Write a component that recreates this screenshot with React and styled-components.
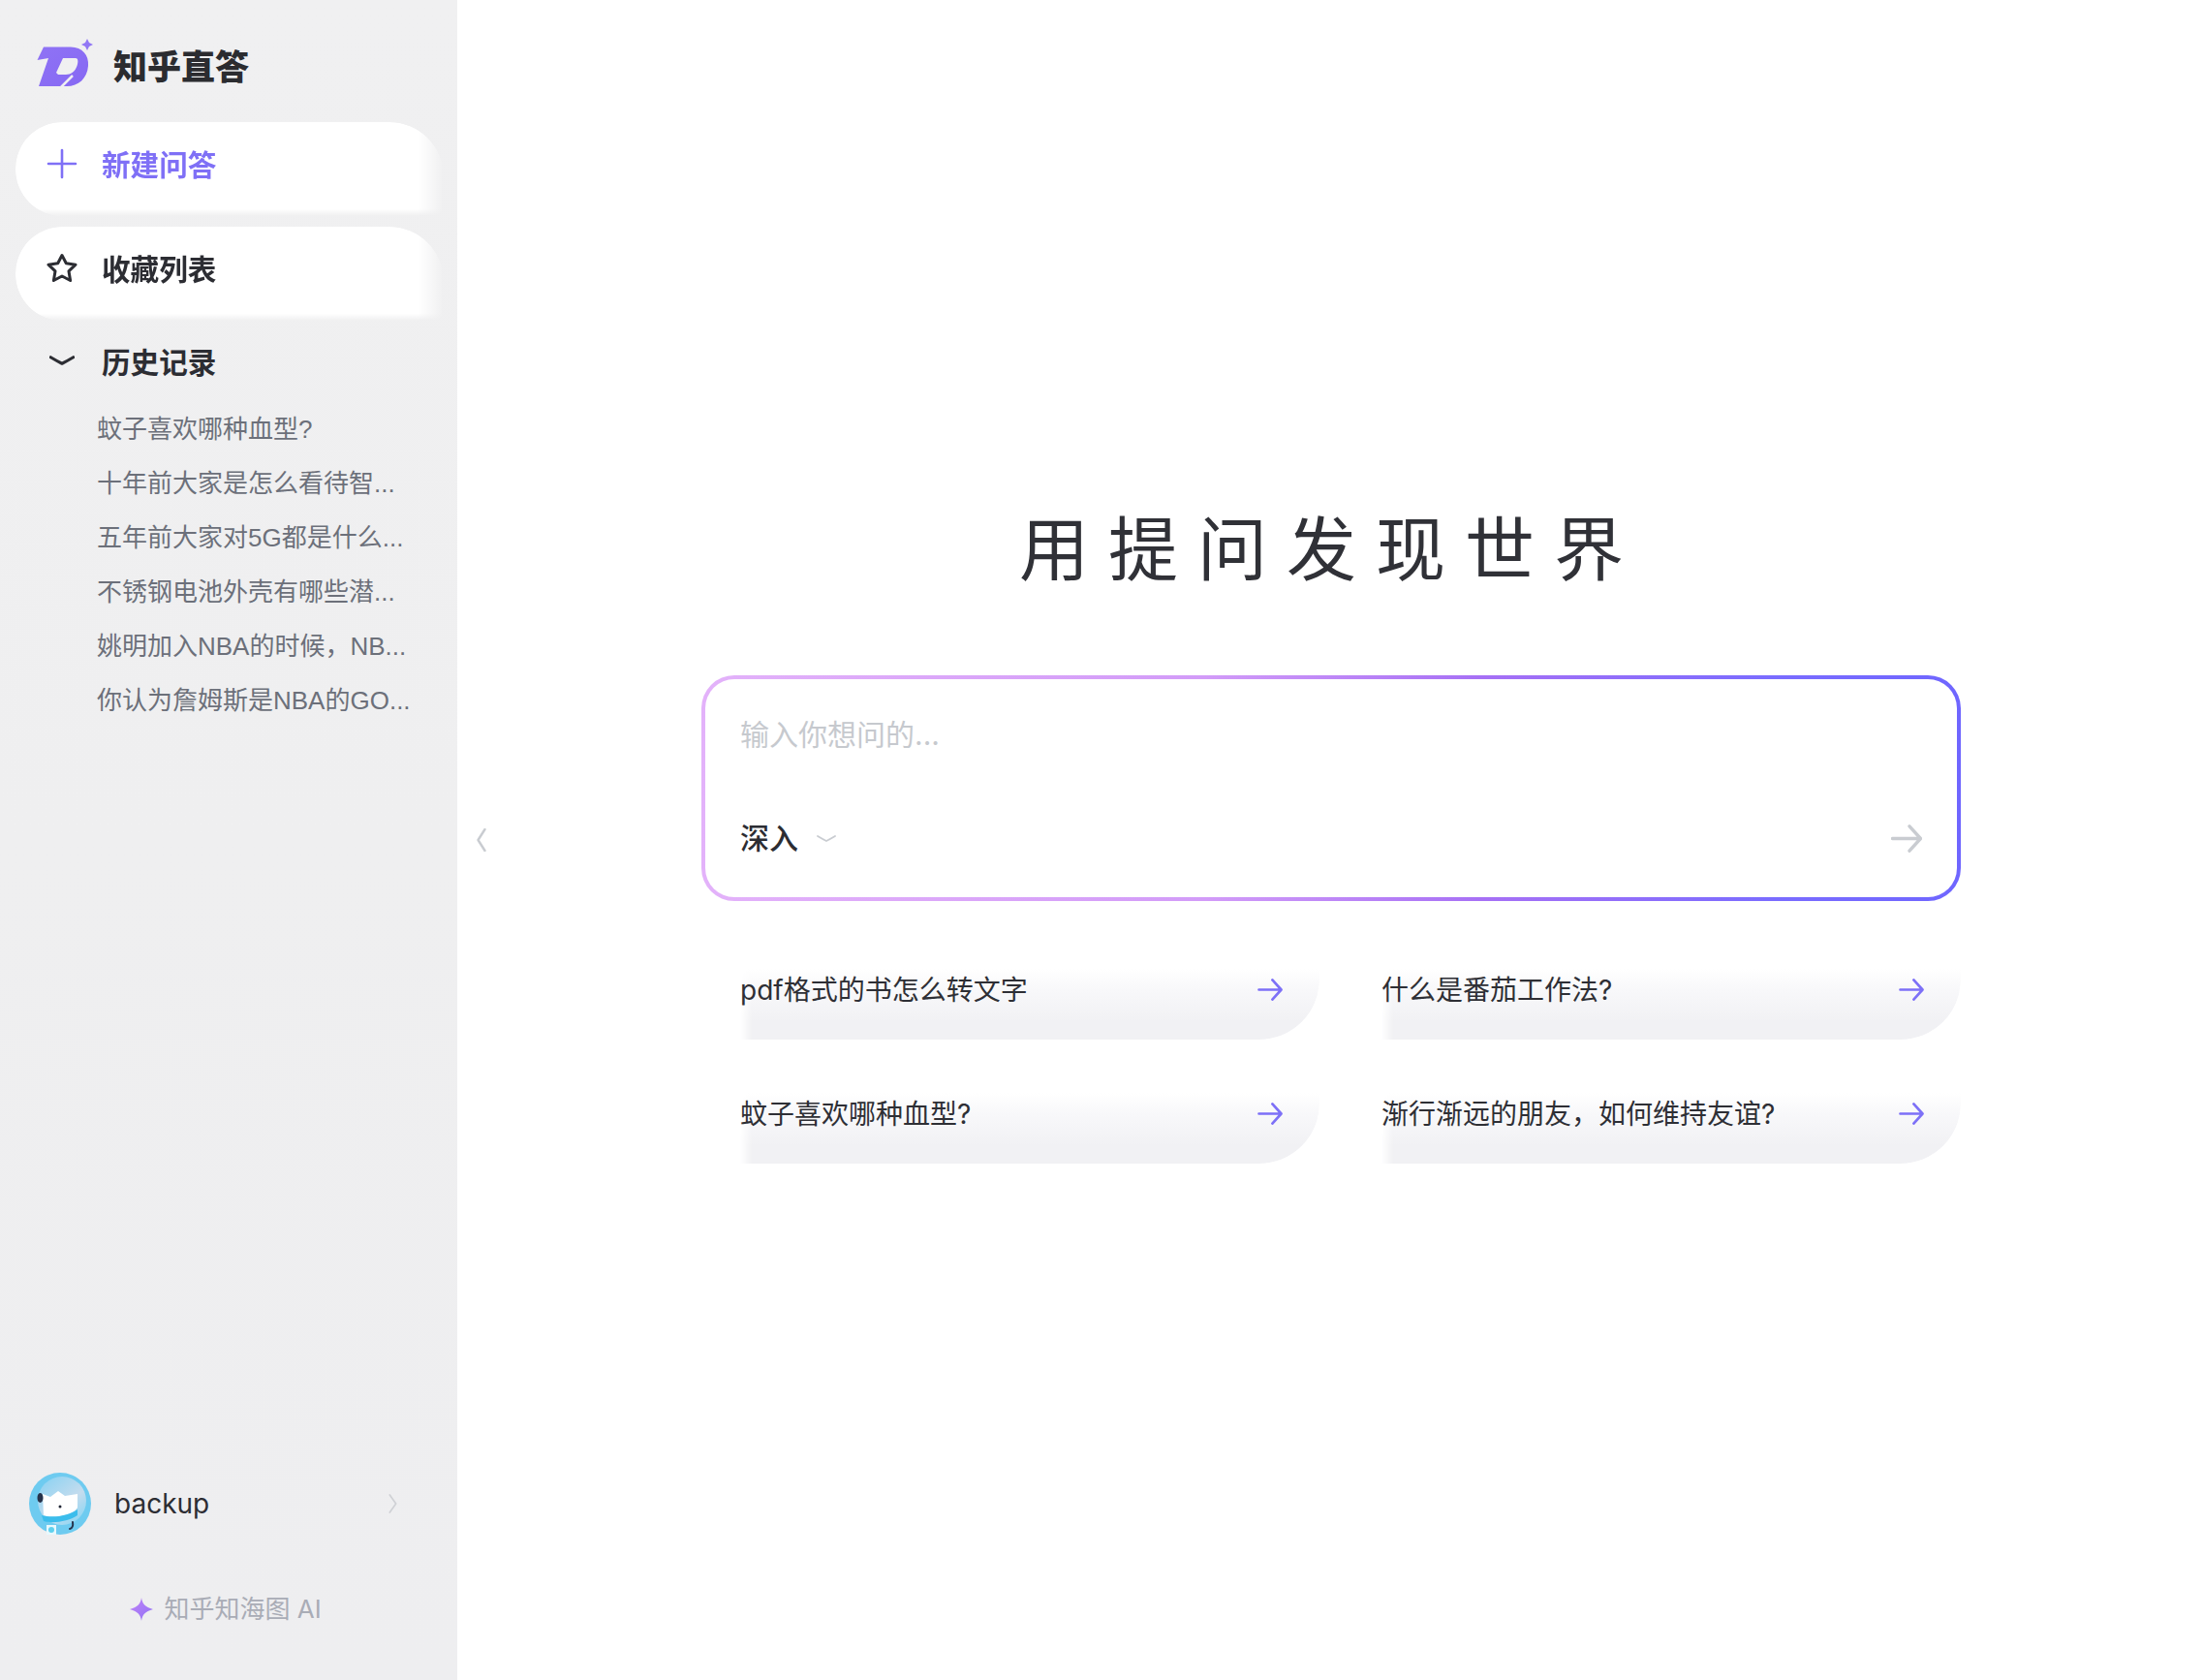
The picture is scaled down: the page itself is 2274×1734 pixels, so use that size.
import React from "react";
import styled, { createGlobalStyle } from "styled-components";

const GlobalStyle = createGlobalStyle`
  * { box-sizing: border-box; }
  html, body { margin: 0; padding: 0; background: #fff; }
  body {
    font-family: Inter, "Noto Sans CJK SC", sans-serif;
    color: #2c2d33;
  }
`;

const Page = styled.div`
  display: flex;
  height: 100vh;
  min-height: 1734px;
`;

const Sidebar = styled.aside`
  width: 472px;
  flex-shrink: 0;
  display: flex;
  flex-direction: column;
  background: linear-gradient(to bottom, #f0f0f1, #efeff0 50%, #eeeef0);
  padding-top: 40px;
`;

const Brand = styled.div`
  display: flex;
  align-items: center;
  height: 50px;
  margin-bottom: 36px;
  padding-left: 38px;
  gap: 19px;
`;

const BrandName = styled.span`
  padding-top: 8px;
  font-size: 35px;
  font-weight: 900;
  line-height: 50px;
  color: #2b2c30;
`;

const NavButton = styled.div`
  display: flex;
  align-items: center;
  width: 442px;
  height: 97px;
  margin: 0 0 11px 16px;
  padding: 0 0 12px 32px;
  gap: 25px;
  background: #fff;
  border-radius: 48px 56px 0 48px;
  color: ${(p) => (p.$accent ? "#7f70f6" : "#2c2d33")};
  font-size: 29.6px;
  font-weight: 600;
  -webkit-mask-image: linear-gradient(to bottom, #000 92%, transparent),
    linear-gradient(to left, transparent, #000 6%);
  -webkit-mask-composite: source-in;
  mask-image: linear-gradient(to bottom, #000 92%, transparent),
    linear-gradient(to left, transparent, #000 6%);
  mask-composite: intersect;
`;

const NavIcon = styled.svg`
  width: 32px;
  height: 32px;
  flex-shrink: 0;
  fill: none;
  stroke: currentColor;
  stroke-linecap: round;
  stroke-linejoin: round;
`;

const ChevronSlot = styled.span`
  display: flex;
  align-items: center;
  justify-content: center;
  width: 32px;
  height: 32px;
  flex-shrink: 0;
`;

const HistoryHeader = styled.div`
  display: flex;
  align-items: center;
  height: 56px;
  margin-top: 2px;
  padding-left: 48px;
  gap: 25px;
  font-size: 29.6px;
  font-weight: 600;
`;

const HistoryList = styled.ul`
  list-style: none;
  margin: 15px 0 0;
  padding: 0 0 0 100px;
  font-family: "Liberation Sans", "Noto Sans CJK SC", sans-serif;
`;

const HistoryItem = styled.li`
  height: 56px;
  line-height: 56px;
  font-size: 26px;
  color: #6c707a;
  white-space: nowrap;
`;

const SidebarFooter = styled.div`
  margin-top: auto;
  padding-bottom: 54px;
`;

const UserRow = styled.div`
  display: flex;
  align-items: center;
  padding: 0 62px 0 30px;
  gap: 24px;
  margin-bottom: 58px;
`;

const UserName = styled.span`
  flex: 1;
  font-size: 28px;
  line-height: 64px;
  color: #2c2d33;
`;

const Credit = styled.div`
  display: flex;
  align-items: center;
  justify-content: center;
  gap: 11px;
  margin-left: -6px;
  font-size: 26px;
  line-height: 38px;
  color: #a9acb6;
`;

const Main = styled.main`
  flex: 1;
  display: flex;
  min-width: 0;
  background: #fff;
`;

const CollapseHandle = styled.div`
  align-self: center;
  width: 252px;
  padding-left: 20px;
  line-height: 0;
`;

const Content = styled.div`
  width: 1300px;
  padding-top: 517px;
`;

const Headline = styled.h1`
  margin: 0 0 80px;
  text-align: center;
  font-size: 72px;
  line-height: 100px;
  font-weight: 400;
  letter-spacing: 20px;
  color: #303137;
`;

const AskBox = styled.div`
  height: 233px;
  display: flex;
  flex-direction: column;
  justify-content: space-between;
  padding: 35px 36px 39px 36px;
  border: 4px solid transparent;
  border-radius: 34px;
  background: linear-gradient(#fff, #fff) padding-box,
    linear-gradient(90deg, #e3b2fa 0%, #d29bf8 40%, #a670f5 62%, #7a6cff 85%, #6f66ff 100%) border-box;
`;

const Placeholder = styled.div`
  font-size: 30px;
  line-height: 44px;
  color: #c6c9ce;
`;

const AskFooter = styled.div`
  display: flex;
  align-items: center;
  justify-content: space-between;
`;

const ModePicker = styled.div`
  display: flex;
  align-items: center;
  gap: 19px;
  font-size: 30px;
  font-weight: 500;
  line-height: 44px;
  color: #2c2d33;
`;

const Suggestions = styled.div`
  display: grid;
  grid-template-columns: 1fr 1fr;
  margin: 70px 0 0 40px;
  column-gap: 64px;
  row-gap: 55px;
`;

const Suggestion = styled.div`
  position: relative;
  display: flex;
  align-items: flex-start;
  justify-content: space-between;
  height: 73px;
  padding: 2px 38px 0 0;
  font-size: 28px;
  line-height: 40px;
  color: #2e2f35;
  &::before {
    content: "";
    position: absolute;
    inset: 0;
    z-index: 0;
    border-radius: 0 0 62px 0;
    background: linear-gradient(to bottom, #fff 0%, #f8f8fa 30%, #f1f1f4 75%);
    -webkit-mask-image: linear-gradient(to right, transparent, #000 12px);
    mask-image: linear-gradient(to right, transparent, #000 12px);
  }
  & > * {
    position: relative;
    z-index: 1;
  }
`;

const Arrow = styled.svg`
  flex-shrink: 0;
  width: ${(p) => p.$size}px;
  height: ${(p) => Math.round(p.$size * 0.9)}px;
  margin-top: ${(p) => p.$top}px;
  fill: none;
  stroke: ${(p) => p.$color};
  stroke-width: 2.8;
  stroke-linecap: round;
  stroke-linejoin: round;
`;

const Chevron = ({ dir, width, height, stroke, strokeWidth }) => {
  const paths = {
    down: "M1 2 Q6 5 10 7 Q14 5 19 2",
    left: "M8 1 L1 12 L8 23",
    right: "M1 1 L8 11 L1 21",
  };
  const boxes = { down: "0 0 20 9", left: "0 0 9 24", right: "0 0 9 22" };
  return (
    <svg width={width} height={height} viewBox={boxes[dir]} fill="none" stroke={stroke} strokeWidth={strokeWidth} strokeLinecap="round" strokeLinejoin="round">
      <path d={paths[dir]} />
    </svg>
  );
};

const ArrowIcon = ({ size, top, color }) => (
  <Arrow $size={size} $top={top} $color={color} viewBox="0 0 26 24">
    <path d="M1 12H24.5M15.5 1.5L25 12L15.5 22.5" />
  </Arrow>
);

const Logo = () => (
  <svg width="60" height="50" viewBox="0 0 60 50">
    <defs>
      <linearGradient id="logoFill" x1="0" y1="0" x2="1" y2="1">
        <stop offset="0" stopColor="#8f73f5" />
        <stop offset="1" stopColor="#8668f3" />
      </linearGradient>
    </defs>
    <path
      fillRule="evenodd"
      fill="url(#logoFill)"
      d="M0.5 22 L7 8.5 H35 C47 8.5 54 17 53 28 C52 41 43 49 31 49 H2 L12 20 Z M27 20 L40 20 C42.5 20 43 23 41.5 28 C39.5 34 35 37 30 37 L22 37 L20 35 Z"
    />
    <path d="M25 50 L37 38" stroke="#efeff1" strokeWidth="2.5" />
    <path d="M52 0 L54 4 L58 6 L54 8 L52 12 L50 8 L46 6 L50 4 Z" fill="#9278f5" />
  </svg>
);

const Avatar = () => (
  <svg width="64" height="64" viewBox="0 0 64 64">
    <defs>
      <linearGradient id="avatarInner" x1="0.2" y1="0" x2="0.9" y2="0.9">
        <stop offset="0" stopColor="#8fd3f2" />
        <stop offset="0.6" stopColor="#c4dcee" />
        <stop offset="1" stopColor="#8ed6f3" />
      </linearGradient>
    </defs>
    <circle cx="32" cy="32" r="32" fill="#6ecbf0" />
    <circle cx="34" cy="29" r="25" fill="url(#avatarInner)" />
    <path d="M14 22 L22 25 L30 19 L37 24 L50 22 L50 36 C46 44 24 48 15 44 Z" fill="#fff" />
    <path d="M13 44 C24 47 40 45 50 38 L50 44 C42 50 24 53 15 50 Z" fill="#3bbdec" />
    <path d="M18 54 H28 V64 H18 Z" fill="#e8f8fd" />
    <circle cx="23" cy="59" r="3" fill="#5fd1ee" />
    <ellipse cx="11.5" cy="26" rx="3" ry="5" fill="#26324a" />
    <circle cx="32" cy="35" r="1.5" fill="#1f2433" />
    <path d="M42 58 Q46 57 45 51" fill="none" stroke="#26324a" strokeWidth="2" strokeLinecap="round" />
  </svg>
);

const history = [
  "蚊子喜欢哪种血型?",
  "十年前大家是怎么看待智...",
  "五年前大家对5G都是什么...",
  "不锈钢电池外壳有哪些潜...",
  "姚明加入NBA的时候，NB...",
  "你认为詹姆斯是NBA的GO...",
];

const prompts = [
  "pdf格式的书怎么转文字",
  "什么是番茄工作法?",
  "蚊子喜欢哪种血型?",
  "渐行渐远的朋友，如何维持友谊?",
];

export default function App() {
  return (
    <Page>
      <GlobalStyle />
      <Sidebar>
        <Brand>
          <Logo />
          <BrandName>知乎直答</BrandName>
        </Brand>
        <NavButton $accent>
          <NavIcon viewBox="0 0 32 32" strokeWidth="2.6">
            <path d="M16 2V30M2 16H30" />
          </NavIcon>
          新建问答
        </NavButton>
        <NavButton>
          <NavIcon viewBox="0 0 32 32" strokeWidth="3">
            <path d="M16 2.5L20.3 10.8L30 12.2L23 18.9L24.6 28.5L16 24L7.4 28.5L9 18.9L2 12.2L11.7 10.8Z" />
          </NavIcon>
          收藏列表
        </NavButton>
        <HistoryHeader>
          <ChevronSlot>
            <Chevron dir="down" width={26} height={12} stroke="#2c2d33" strokeWidth={2.4} />
          </ChevronSlot>
          历史记录
        </HistoryHeader>
        <HistoryList>
          {history.map((item) => (
            <HistoryItem key={item}>{item}</HistoryItem>
          ))}
        </HistoryList>
        <SidebarFooter>
          <UserRow>
            <Avatar />
            <UserName>backup</UserName>
            <Chevron dir="right" width={9} height={20} stroke="#cfd1d5" strokeWidth={1.8} />
          </UserRow>
          <Credit>
            <svg width="24" height="24" viewBox="0 0 24 24">
              <defs>
                <linearGradient id="sparkFill" x1="0" y1="0" x2="1" y2="1">
                  <stop offset="0" stopColor="#c283f7" />
                  <stop offset="1" stopColor="#8f72f6" />
                </linearGradient>
              </defs>
              <path d="M12 0 C13 6.5 15.5 9.5 24 12 C15.5 14.5 13 17.5 12 24 C11 17.5 8.5 14.5 0 12 C8.5 9.5 11 6.5 12 0 Z" fill="url(#sparkFill)" />
            </svg>
            知乎知海图 AI
          </Credit>
        </SidebarFooter>
      </Sidebar>
      <Main>
        <CollapseHandle>
          <Chevron dir="left" width={10} height={24} stroke="#c9ccd1" strokeWidth={2.4} />
        </CollapseHandle>
        <Content>
          <Headline>用提问发现世界</Headline>
          <AskBox>
            <Placeholder>输入你想问的...</Placeholder>
            <AskFooter>
              <ModePicker>
                深入
                <Chevron dir="down" width={20} height={9} stroke="#c9ccd1" strokeWidth={1.8} />
              </ModePicker>
              <ArrowIcon size={32} top={0} color="#c9ccd1" />
            </AskFooter>
          </AskBox>
          <Suggestions>
            {prompts.map((text) => (
              <Suggestion key={text}>
                <span>{text}</span>
                <ArrowIcon size={26} top={8} color="#7d70f7" />
              </Suggestion>
            ))}
          </Suggestions>
        </Content>
      </Main>
    </Page>
  );
}
